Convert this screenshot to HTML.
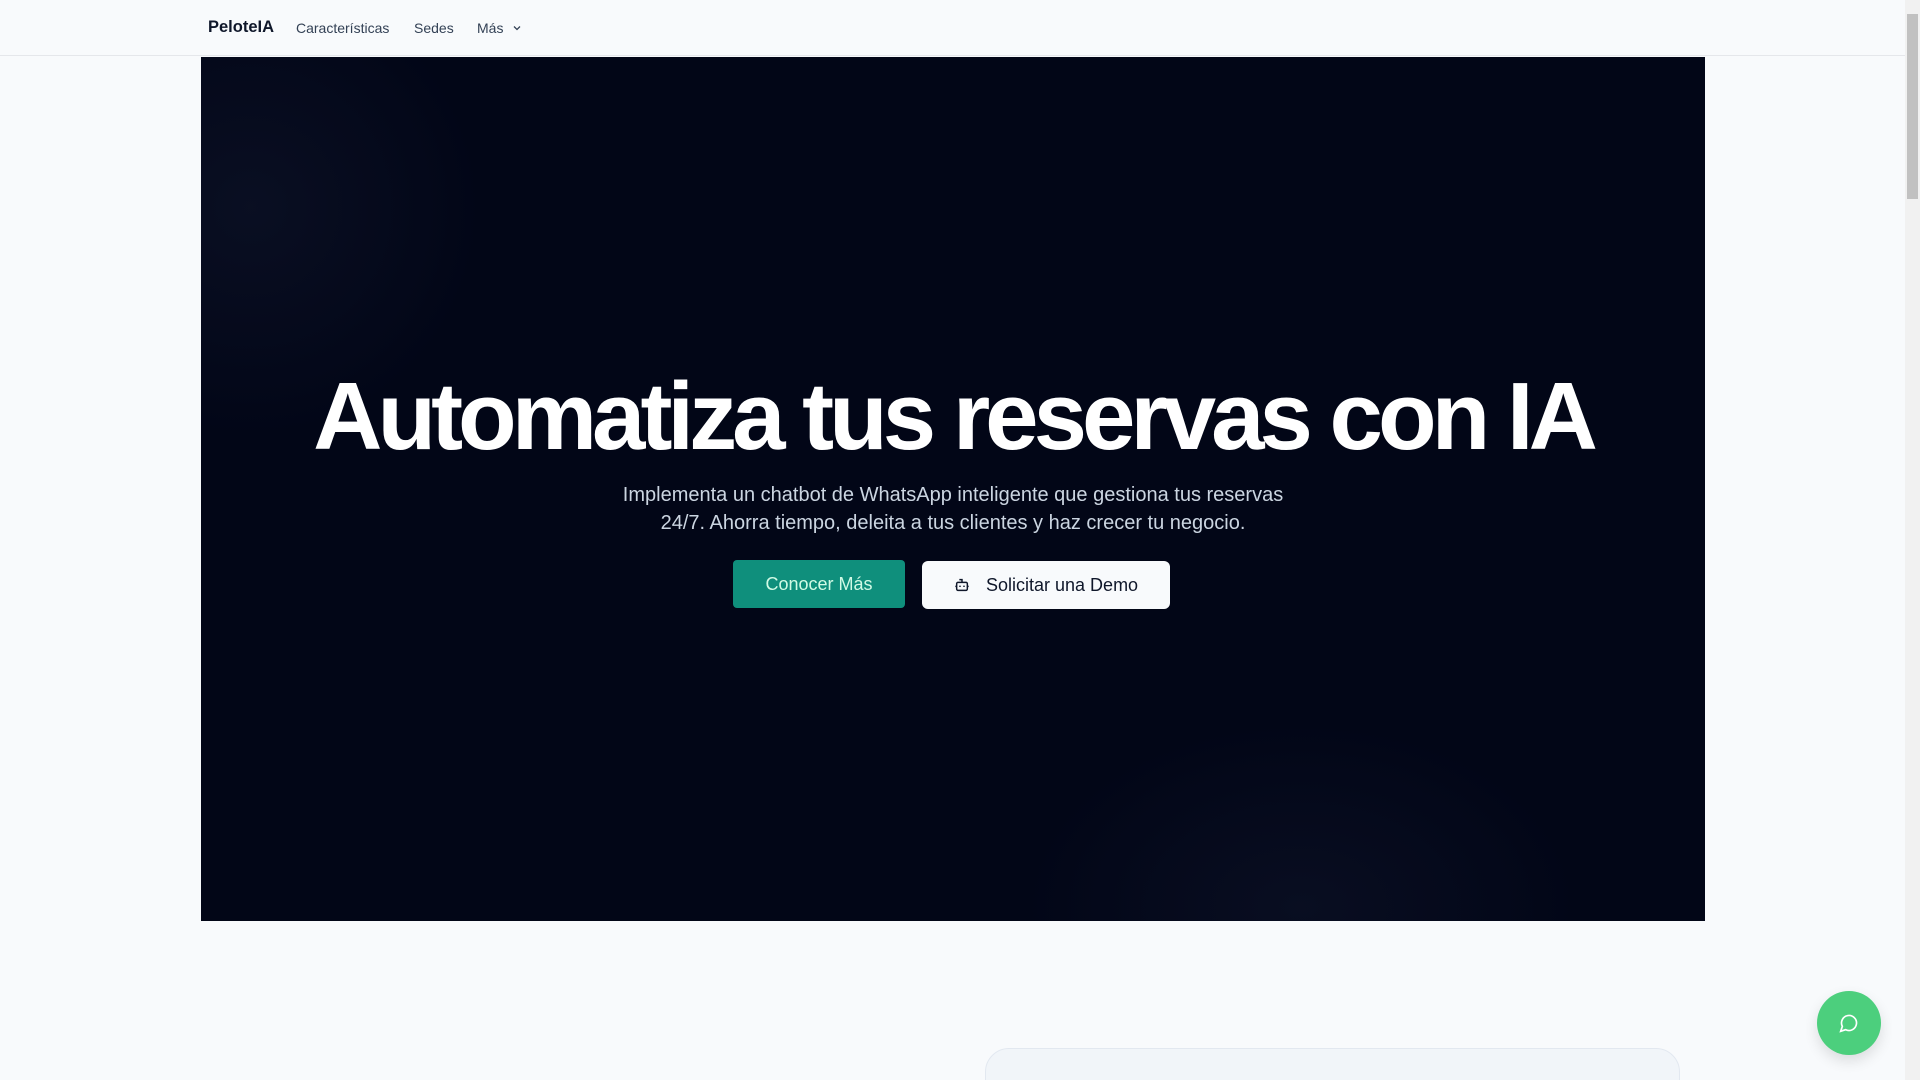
<!DOCTYPE html>
<html><head><meta charset="utf-8"><style>
*{margin:0;padding:0;box-sizing:border-box}
html,body{width:1920px;height:1080px;overflow:hidden}
body{background:#f8fafc;font-family:"Liberation Sans",sans-serif;position:relative}
.nav{position:absolute;left:0;top:0;width:1905px;height:56px;border-bottom:1px solid #e5e7eb;background:#f8fafc}
.nav span{position:absolute;top:20px;font-size:14px;color:#334155}
.logo{left:208px;font-weight:bold;font-size:16.5px!important;color:#0f172a!important;top:18px!important}
.hero{position:absolute;left:201px;top:57px;width:1504px;height:864px;background:#020617;overflow:hidden}
.hero .g1{position:absolute;left:-200px;top:-100px;width:500px;height:500px;background:radial-gradient(circle,rgba(40,50,80,.2),transparent 65%)}
.hero .g2{position:absolute;left:800px;top:650px;width:600px;height:400px;background:radial-gradient(ellipse,rgba(40,50,80,.18),transparent 65%)}
h1{position:absolute;left:0;width:1504px;top:305px;text-align:center;color:#fff;font-size:96px;font-weight:bold;letter-spacing:-5px;line-height:110px}
p.sub{position:absolute;left:0;width:1504px;top:424px;text-align:center;color:#cbd5e1;font-size:20px;line-height:28px}
.b1{position:absolute;left:532px;top:503px;width:172px;height:48px;background:#0f8f7c;color:#d1fae5;border-radius:4px;font-size:18px;text-align:center;line-height:48px}
.b2{position:absolute;left:721px;top:504px;width:248px;height:48px;background:#f8fafc;color:#0f172a;border-radius:6px;font-size:18px;line-height:48px;padding-left:64px}
.b2 svg{position:absolute;left:32px;top:16px}
.card{position:absolute;left:985px;top:1048px;width:695px;height:60px;background:#f1f5f9;border-radius:24px;border:1px solid #e2e8f0}
.chat{position:absolute;left:1817px;top:991px;width:64px;height:64px;border-radius:50%;background:#4ccf7d;box-shadow:0 6px 14px rgba(0,0,0,.12)}
.chat svg{position:absolute;left:22px;top:22px}
.sb{position:absolute;left:1905px;top:0;width:15px;height:1080px;background:#f1f1f1}
.sb .th{position:absolute;left:2px;top:14px;width:11px;height:185px;background:#c1c1c1}
</style></head><body>
<div class="nav"><span class="logo">PeloteIA</span><span style="left:296px">Características</span><span style="left:414px">Sedes</span><span style="left:477px">Más <svg width="12" height="12" viewBox="0 0 24 24" style="vertical-align:-1px;margin-left:4px"><path d="M6 9l6 6 6-6" fill="none" stroke="#334155" stroke-width="2.5"/></svg></span></div>
<div class="hero"><div class="g1"></div><div class="g2"></div>
<h1>Automatiza tus reservas con IA</h1>
<p class="sub">Implementa un chatbot de WhatsApp inteligente que gestiona tus reservas<br>24/7. Ahorra tiempo, deleita a tus clientes y haz crecer tu negocio.</p>
<div class="b1">Conocer Más</div>
<div class="b2"><svg width="16" height="16" viewBox="0 0 24 24" fill="none" stroke="#0f172a" stroke-width="2.2"><path d="M12 8V4H8"/><rect x="4" y="8" width="16" height="12" rx="2"/><path d="M2 14h2M20 14h2M9 13v2M15 13v2"/></svg>Solicitar una Demo</div>
</div>
<div class="card"></div>
<div class="chat"><svg width="20" height="20" viewBox="0 0 24 24" fill="none" stroke="#fff" stroke-width="2"><path d="M7.9 20A9 9 0 1 0 4 16.1L2 22z"/></svg></div>
<div class="sb"><div class="th"></div></div>
</body></html>
